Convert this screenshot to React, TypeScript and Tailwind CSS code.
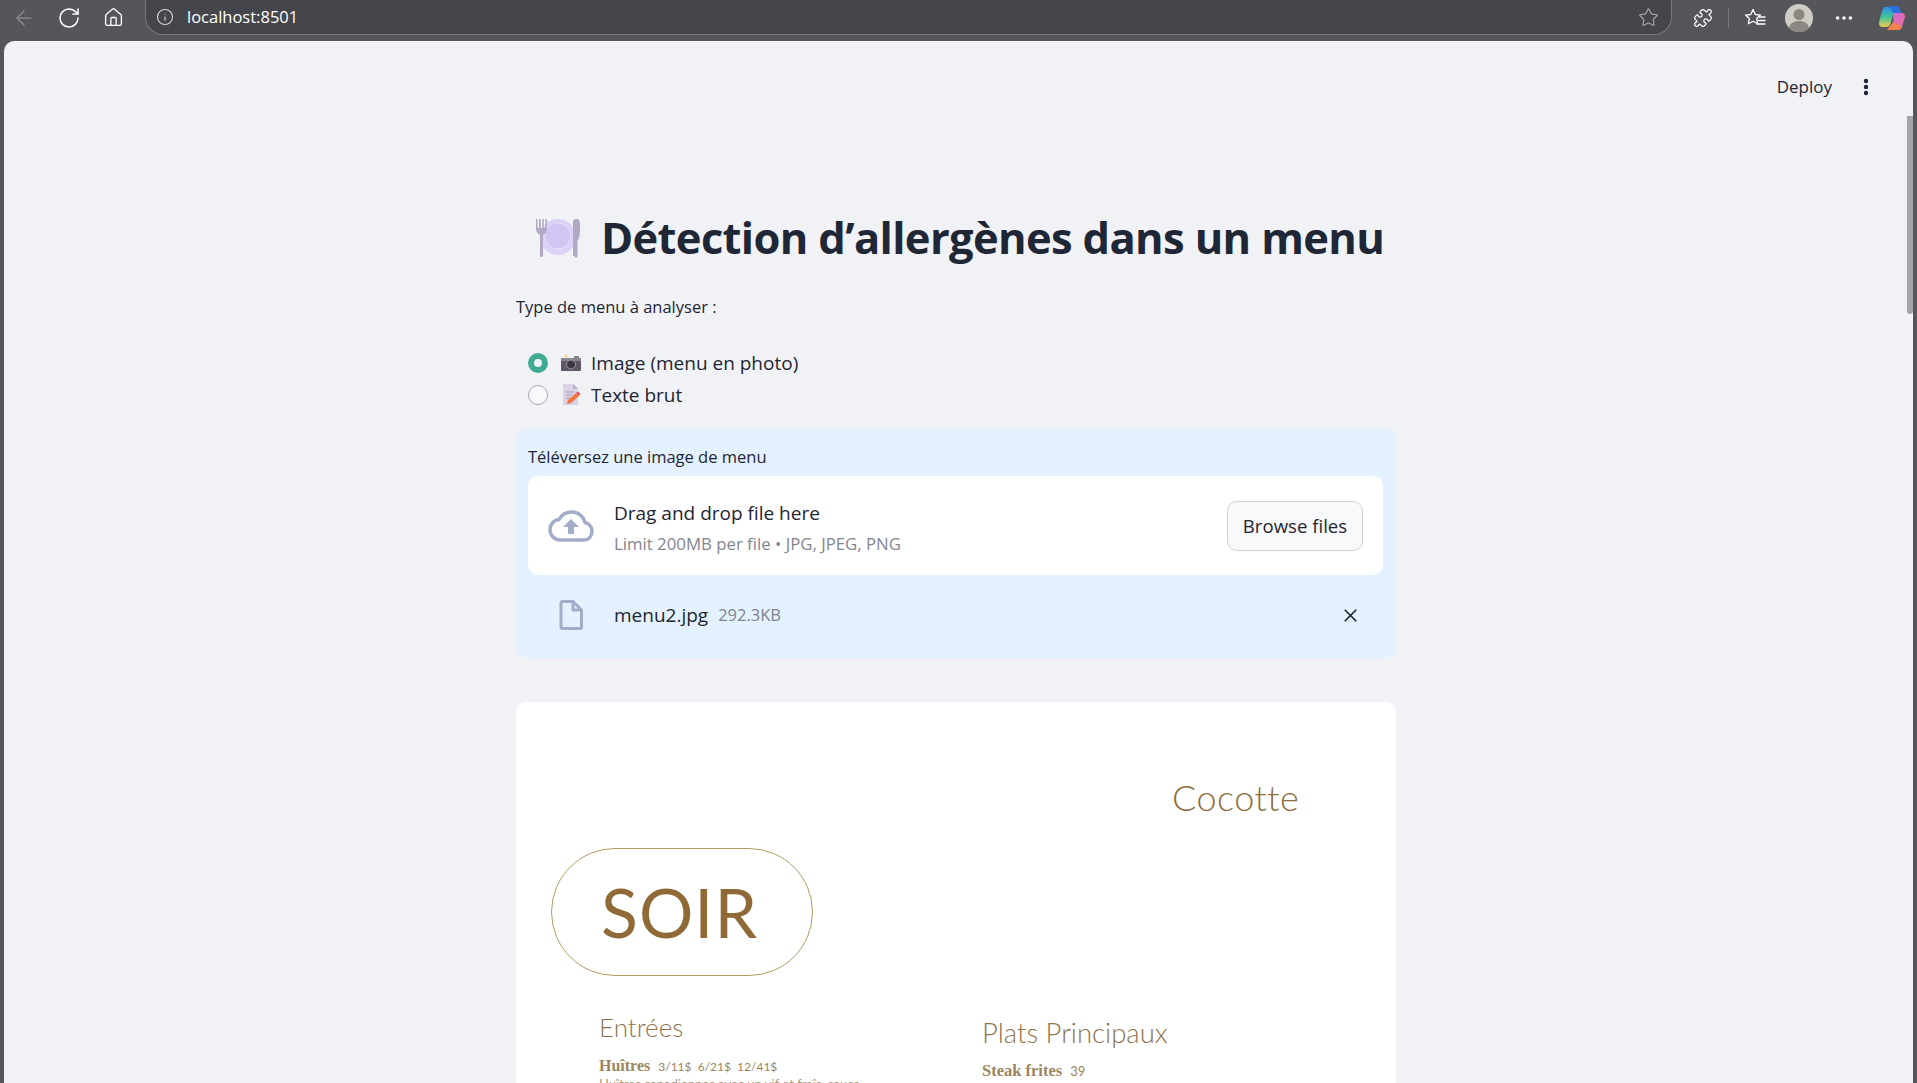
import React from 'react';
import { ArrowLeft, RotateCw, Home, Info, Star, Puzzle, MoreHorizontal, X } from 'lucide-react';

const sans = { fontFamily: '"Open Sans", sans-serif' };
const lato = { fontFamily: 'Lato, sans-serif' };
const serif = { fontFamily: '"Liberation Serif", serif' };

const PlateEmoji = () => (
  <svg className="shrink-0" width="46" height="40" viewBox="0 0 46 40">
    <circle cx="23" cy="19" r="18" fill="#dcd1f6" />
    <circle cx="23" cy="18" r="13" fill="#d2c5f3" stroke="#e6def9" strokeWidth="1" />
    <path d="M1 1v10c0 3 2 5 4 6v21a1.600 1.600 0 0 0 3 0V17c2-1 4-3 4-6V1h-1.600v9H8.800V1H7.300v9H5.700V1H4v9H2.500V1z" fill="#b1a8c2" />
    <path d="M38 38V3c0-2 4-3 6-1 1.500 2 1.500 12 0 18l-1.500 3v15a1.500 1.500 0 0 1-3 0z" fill="#b1a8c2" />
  </svg>
);

const CameraEmoji = () => (
  <svg width="20" height="18" viewBox="0 0 20 18">
    <path d="M3 2l2-2 2 2-2 2z" fill="#f2dc7c" />
    <rect x="0" y="4" width="20" height="13" rx="1" fill="#5d5664" />
    <rect x="0" y="4" width="20" height="3" fill="#8a8590" />
    <rect x="13" y="2" width="5" height="3" fill="#8a8590" />
    <circle cx="10" cy="10.500" r="4.500" fill="#3c3843" stroke="#a29da8" strokeWidth="1" />
  </svg>
);

const MemoEmoji = () => (
  <svg width="20" height="22" viewBox="0 0 20 22">
    <path d="M2 0h10l5 5v16H2z" fill="#dcd2e8" />
    <path d="M12 0l5 5h-5z" fill="#b8abc8" />
    <path d="M5 8h8M5 11h6M5 14h4" stroke="#a99ab8" strokeWidth="1" />
    <path d="M6 20l1-4 8-7 3 3-8 7z" fill="#f0763c" />
    <path d="M15 9l2-1.500 2.500 2.500-1.500 2z" fill="#e8505b" />
  </svg>
);

const Avatar = () => (
  <svg width="28" height="28" viewBox="0 0 28 28">
    <circle cx="14" cy="14" r="14" fill="#cfccc6" />
    <circle cx="14" cy="10.500" r="5.500" fill="#8b8882" />
    <path d="M4 24c1-5 5-7 10-7s9 2 10 7a14 14 0 0 1-20 0z" fill="#8b8882" />
  </svg>
);

const Favorites = () => (
  <svg width="22" height="20" viewBox="0 0 22 20" fill="none" stroke="white" strokeWidth="1.300" strokeLinejoin="round">
    <path d="M9 1.500l2.300 5 5.200.6-3.800 3.500 1 5.200L9 13.300l-4.700 2.500 1-5.200L1.500 7.100l5.200-.6z" />
    <path d="M15 9h6M14.500 12.500h6.500M13 16h8" strokeLinecap="round" />
  </svg>
);

const Copilot = () => (
  <svg width="28" height="28" viewBox="0 0 28 28">
    <defs>
      <linearGradient id="cpa" x1="0" y1="0" x2="0" y2="1">
        <stop offset="0" stopColor="#2f8fe8" />
        <stop offset="0.5" stopColor="#3fc59a" />
        <stop offset="1" stopColor="#f2c94c" />
      </linearGradient>
      <linearGradient id="cpb" x1="0" y1="0" x2="1" y2="1">
        <stop offset="0" stopColor="#c86ae0" />
        <stop offset="1" stopColor="#f0708a" />
      </linearGradient>
    </defs>
    <path d="M8 3h9l-4 15c-1 3-2 5-5 5H4c-2 0-3-2-3-4 1-5 3-12 4-14 .5-1.500 1.500-2 3-2z" fill="url(#cpa)" />
    <path d="M15 9h9c2 0 3 2 3 4l-3 10c-.5 2-2 3-4 3h-8c2-1 3-3 3.500-5z" fill="url(#cpb)" />
    <path d="M11 2h7c2 0 3 1 4 3l1 4h-8z" fill="#2a6fe0" />
    <path d="M9 26h11c2 0 3-1 4-3l-9-5z" fill="#f0824a" />
  </svg>
);

const Cloud = () => (
  <svg className="shrink-0" width="46" height="32" viewBox="0 0 46 32" fill="none">
    <path d="M37 12.500C35.500 6 30 2 23.500 2 18 2 13.500 5 11 9.500 5.500 10 2 14.500 2 20c0 5.500 4.500 10 10 10h24c4.500 0 8-3.600 8-8.500 0-4.500-3-8.500-7-9z" stroke="#a3adca" strokeWidth="3.500" />
    <path d="M23 9l8 8h-5v7h-6v-7h-5z" fill="#a3adca" />
  </svg>
);

const FileIcon = () => (
  <svg className="shrink-0" width="24" height="30" viewBox="0 0 24 30" fill="none">
    <path d="M2 3a1.500 1.500 0 0 1 1.500-1.500H14L22.500 10v17a1.500 1.500 0 0 1-1.500 1.500H3.500A1.500 1.500 0 0 1 2 27z" stroke="#a3adca" strokeWidth="3" />
    <path d="M14 1.500V10h8.500" stroke="#a3adca" strokeWidth="3" />
  </svg>
);

const Toolbar = () => (
  <div className="flex h-[41px] shrink-0 items-start bg-[#55565b] text-white">
    <div className="flex h-[35px] w-[145px] shrink-0 items-center pl-[12px]">
      <ArrowLeft className="h-[24px] w-[24px] text-[#8e8f93]" strokeWidth={1.25} />
      <RotateCw className="ml-[21px] h-[24px] w-[24px]" strokeWidth={1.5} />
      <Home className="ml-[22px] h-[21px] w-[21px]" strokeWidth={1.5} />
    </div>
    <div className="flex h-[35px] w-[1527px] items-center rounded-b-[18px] border border-t-0 border-[#77787c] bg-[#45464b] pl-[10px] pr-[12px]">
      <Info className="h-[18px] w-[18px] text-[#d8d8da]" strokeWidth={1.5} />
      <span className="ml-[13px] text-[16.500px] text-white" style={sans}>localhost:8501</span>
      <Star className="ml-auto h-[21px] w-[21px] text-[#a9aaad]" strokeWidth={1.25} />
    </div>
    <div className="flex h-[35px] flex-1 items-center pl-[21px]">
      <Puzzle className="h-[20px] w-[20px]" strokeWidth={1.5} />
      <div className="ml-[15px] h-[20px] w-px bg-[#77787c]" />
      <span className="ml-[15px]"><Favorites /></span>
      <span className="ml-[19px]"><Avatar /></span>
      <MoreHorizontal className="ml-[20px] h-[22px] w-[22px]" strokeWidth={2} />
      <span className="ml-[23px]"><Copilot /></span>
    </div>
  </div>
);

const Menu = () => (
  <div className="mt-[44px] h-[600px] rounded-t-[10px] bg-white pl-[35px]">
    <div className="flex h-[146px] items-start pt-[71px]">
      <div className="ml-[621px] text-[36px] leading-[48px] font-light tracking-[0.5px] text-[#8f6e3e]" style={lato}>Cocotte</div>
    </div>
    <div className="flex h-[128px] w-[262px] items-center justify-center rounded-[64px] border-[1.5px] border-[#b09c62] pr-[5px]">
      <span className="text-[68px] leading-none tracking-[1px] text-[#8f6a36]" style={lato}>SOIR</span>
    </div>
    <div className="flex">
      <div className="w-[431px] pl-[48px] pt-[35px]">
        <div className="text-[26px] leading-[32px] font-light text-[#8f744c]" style={lato}>Entrées</div>
        <div className="mt-[13px] text-[16px] leading-[18px] text-[#9a8560]">
          <span className="font-bold" style={serif}>Huîtres</span>
          <span className="ml-[8px] text-[12px]" style={lato}>3/11$&nbsp; 6/21$&nbsp; 12/41$</span>
        </div>
        <div className="text-[13px] leading-[16px] text-[#a89a80] whitespace-nowrap" style={lato}>Huîtres canadiennes avec un vif et fraîs, sauce</div>
      </div>
      <div className="pt-[41px]">
        <div className="text-[27.500px] leading-[32px] font-light text-[#8f744c]" style={lato}>Plats Principaux</div>
        <div className="mt-[12px] text-[16.500px] leading-[18px] text-[#9a8560]">
          <span className="font-bold" style={serif}>Steak frites</span>
          <span className="ml-[8px] text-[13px]" style={lato}>39</span>
        </div>
      </div>
    </div>
  </div>
);

export default function App() {
  return (
    <div className="flex h-[1083px] w-[1917px] flex-col overflow-hidden bg-[#55565b]" style={sans}>
      <Toolbar />
      <div className="relative mx-[4px] flex-1 overflow-hidden rounded-t-[10px] bg-[#f0f2f6] text-[#1f2532]">
        {/* scrollbar */}
        <div className="absolute right-0 top-[75px] h-[198px] w-[6px] rounded-b-[3px] bg-[#a3a5a9]" />

        <div className="flex h-[92px] items-center justify-end pr-[44px]">
          <span className="text-[17px]">Deploy</span>
          <svg className="ml-[31px]" width="6" height="18" viewBox="0 0 6 18" fill="#1f2532">
            <circle cx="3" cy="3" r="2.200" />
            <circle cx="3" cy="9" r="2.200" />
            <circle cx="3" cy="15" r="2.200" />
          </svg>
        </div>

        <div className="ml-[512px] w-[880px]">
          <div className="mt-[77px] flex h-[56px] items-center pl-[19px]">
            <PlateEmoji />
            <h1 className="ml-[20px] text-[43.500px] leading-[56px] font-bold tracking-[-0.65px] text-[#1f2737] whitespace-nowrap">Détection d’allergènes dans un menu</h1>
          </div>
          <p className="mt-[29px] text-[16.500px] leading-[24px]">Type de menu à analyser :</p>

          <div className="mt-[32px] flex flex-col gap-[8px] pl-[12px]">
            <div className="flex h-[24px] items-center">
              <span className="flex h-[20px] w-[20px] items-center justify-center rounded-full bg-[#3fab93]">
                <span className="h-[8px] w-[8px] rounded-full bg-[#f0f2f6]" />
              </span>
              <span className="ml-[13px] flex w-[20px] justify-center"><CameraEmoji /></span>
              <span className="ml-[10px] text-[19px] leading-[24px]">Image (menu en photo)</span>
            </div>
            <div className="flex h-[24px] items-center">
              <span className="h-[20px] w-[20px] rounded-full border border-[#a8a8ac] bg-[#f8f9fb]" />
              <span className="ml-[13px] flex w-[20px] justify-center"><MemoEmoji /></span>
              <span className="ml-[10px] text-[19px] leading-[24px]">Texte brut</span>
            </div>
          </div>

          <div className="mt-[22px] rounded-[10px] bg-[#e4f1fe] pb-[28px] pl-[12px] pr-[13px] pt-[16px]">
            <p className="text-[16.500px] leading-[24px]">Téléversez une image de menu</p>
            <div className="mt-[7px] flex h-[99px] items-center rounded-[10px] bg-white px-[20px]">
              <Cloud />
              <div className="ml-[20px] pt-[5px]">
                <div className="text-[19px] leading-[26px]">Drag and drop file here</div>
                <div className="mt-[6px] text-[16.800px] leading-[24px] text-[#84868f]">Limit 200MB per file • JPG, JPEG, PNG</div>
              </div>
              <button className="ml-auto mt-[1px] h-[50px] w-[136px] rounded-[10px] border border-[#cfd0d4] bg-[#f8f9fb] text-[18.600px]">Browse files</button>
            </div>
            <div className="mt-[25px] flex h-[30px] items-center pl-[31px] pr-[22px]">
              <FileIcon />
              <span className="ml-[31px] text-[19px]">menu2.jpg</span>
              <span className="ml-[10px] text-[16.500px] text-[#7f8390]">292.3KB</span>
              <X className="ml-auto h-[21px] w-[21px] text-[#262833]" strokeWidth={2} />
            </div>
          </div>

          <Menu />
        </div>
      </div>
    </div>
  );
}
